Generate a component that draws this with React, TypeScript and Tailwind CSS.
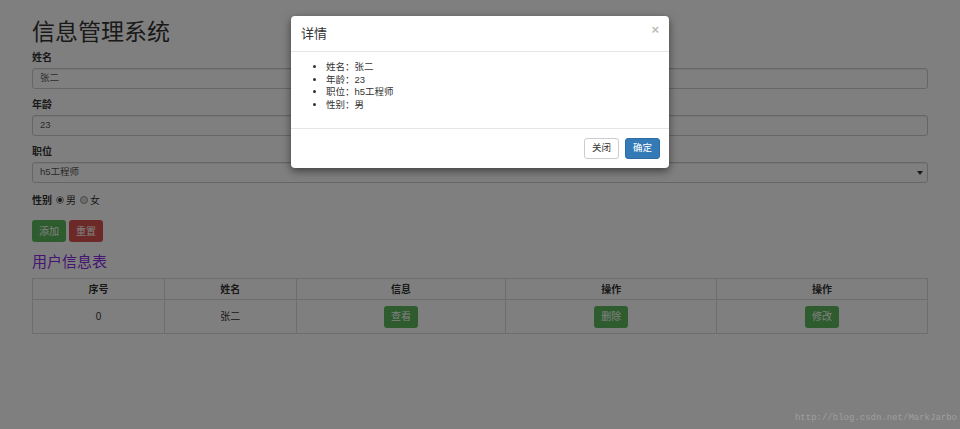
const FONT = { fontFamily: '"Liberation Sans", "Noto Sans CJK SC", sans-serif' };

const COLS = [
  { head: "序号", w: "w-[132px]" },
  { head: "姓名", w: "w-[132px]" },
  { head: "信息", w: "w-[210px]" },
  { head: "操作", w: "w-[211px]" },
  { head: "操作", w: "w-[211px]" },
];

const DETAILS = ["姓名：张二", "年龄：23", "职位：h5工程师", "性别：男"];

function Field({ label, value, select, top }: { label: string; value: string; select?: boolean; top: string }) {
  return (
    <div className={top}>
      <p className="text-[10px] font-bold leading-[14px] text-[#333]">{label}</p>
      <div className="relative mt-[3px] flex h-[21px] items-center rounded-[3px] border border-[#ccc] bg-white pl-[7px] text-[9.5px] text-[#555] shadow-[inset_0_1px_1px_rgba(0,0,0,0.075)]">
        {value}
        {select && (
          <span className="absolute right-[4px] top-[8px] h-0 w-0 border-x-[3px] border-t-[4px] border-x-transparent border-t-[#333]" />
        )}
      </div>
    </div>
  );
}

function Btn({ label, color }: { label: string; color: string }) {
  return (
    <button
      type="button"
      className={`flex h-[22px] w-[34px] items-center justify-center rounded-[3px] text-[10px] text-white ${color}`}
    >
      {label}
    </button>
  );
}

export default function App() {
  return (
    <div className="relative h-[429px] w-[960px] overflow-hidden bg-white" style={FONT}>
      <div className="px-8 pt-[18px]">
        <h1 className="text-[23px] leading-[28px] text-[#333]">信息管理系统</h1>
        <Field top="mt-[5px]" label="姓名" value="张二" />
        <Field top="mt-[9px]" label="年龄" value="23" />
        <Field top="mt-[9px]" label="职位" value="h5工程师" select />
        <div className="mt-[10px] flex h-[14px] items-center gap-[2px] text-[10px] text-[#333]">
          <span className="font-bold">性别</span>
          <span className="ml-[2px] flex h-[8px] w-[8px] items-center justify-center rounded-full border border-[#999] bg-[#eee]">
            <span className="h-[4px] w-[4px] rounded-full bg-[#333]" />
          </span>
          <span>男</span>
          <span className="ml-[2px] h-[8px] w-[8px] rounded-full border border-[#999] bg-[#ddd]" />
          <span>女</span>
        </div>
        <div className="mt-[13px] flex gap-[3px]">
          <Btn label="添加" color="bg-[#5cb85c]" />
          <Btn label="重置" color="bg-[#d9534f]" />
        </div>
        <h3 className="mt-[10px] text-[15px] leading-[20px] text-[#8a2be2]">用户信息表</h3>
        <table className="mt-[6px] w-[896px] border-collapse border border-[#ddd] text-[10px] text-[#333]">
          <thead>
            <tr className="h-[21px]">
              {COLS.map((c, i) => (
                <th key={i} className={`border border-[#ddd] font-bold ${c.w}`}>
                  {c.head}
                </th>
              ))}
            </tr>
          </thead>
          <tbody>
            <tr className="h-[34px]">
              <td className="border border-[#ddd] text-center">0</td>
              <td className="border border-[#ddd] text-center">张二</td>
              {["查看", "删除", "修改"].map((t) => (
                <td key={t} className="border border-[#ddd]">
                  <div className="flex justify-center">
                    <Btn label={t} color="bg-[#5cb85c]" />
                  </div>
                </td>
              ))}
            </tr>
          </tbody>
        </table>
      </div>

      <div className="absolute inset-0 bg-black/50" />

      <div className="absolute left-[291px] top-[16px] w-[378px] rounded-[4px] bg-white shadow-[0_3px_9px_rgba(0,0,0,0.5)]">
        <div className="flex h-[36px] items-center justify-between border-b border-[#e5e5e5] pl-[10px] pr-[10px]">
          <span className="text-[13px] text-[#333]">详情</span>
          <span className="-mt-[8px] text-[13px] font-bold leading-none text-[#bbb]">×</span>
        </div>
        <ul className="h-[76px] list-disc pl-[35px] pt-[9px] text-[9.5px] leading-[12.7px] text-[#333]">
          {DETAILS.map((d) => (
            <li key={d}>{d}</li>
          ))}
        </ul>
        <div className="flex h-[40px] items-center justify-end gap-[6px] border-t border-[#e5e5e5] pr-[9px]">
          <button
            type="button"
            className="flex h-[21px] w-[35px] items-center justify-center rounded-[3px] border border-[#ccc] bg-white text-[9.5px] text-[#333]"
          >
            关闭
          </button>
          <button
            type="button"
            className="flex h-[21px] w-[35px] items-center justify-center rounded-[3px] border border-[#2e6da4] bg-[#337ab7] text-[9.5px] text-white"
          >
            确定
          </button>
        </div>
      </div>

      <span
        className="absolute bottom-[4px] right-[3px] text-[9px] text-white/25"
        style={{ fontFamily: '"Liberation Mono", monospace' }}
      >
        http://blog.csdn.net/MarkJarbo
      </span>
    </div>
  );
}
